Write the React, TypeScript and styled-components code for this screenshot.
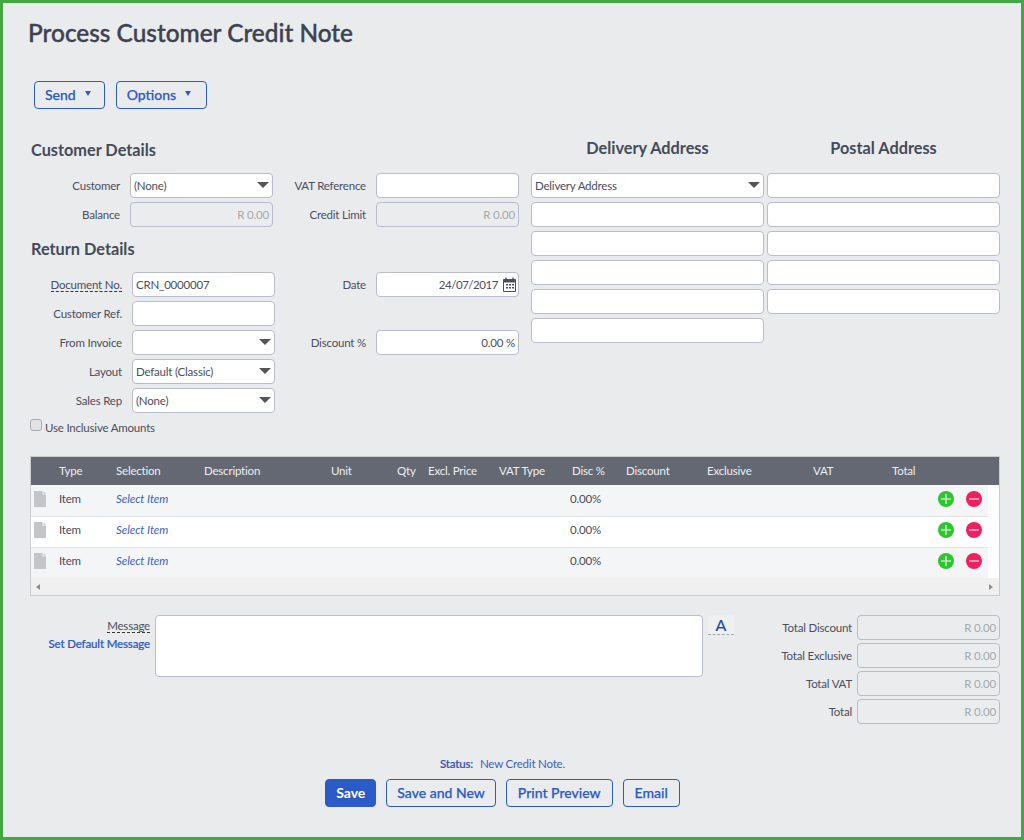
import React from "react";
import styled, { createGlobalStyle } from "styled-components";

const Global = createGlobalStyle`
  html, body { margin: 0; padding: 0; background: #eaebed; }
  * { box-sizing: border-box; }
  body { font-family: Lato, "Liberation Sans", sans-serif; }
`;

const Frame = styled.div`
  width: 1024px;
  height: 840px;
  border: 3px solid #43a843;
  background: #eaebed;
  padding: 0 21px 0 24px;
  color: #4a4e5f;
  display: flex;
  flex-direction: column;
  font-size: 11.5px;
  letter-spacing: -0.2px;
`;

const Title = styled.h1`
  margin: 15px 0 0;
  height: 30px;
  line-height: 30px;
  padding-left: 1px;
  font-size: 24.4px;
  font-weight: 500;
  letter-spacing: 0;
  -webkit-text-stroke: 0.4px #3d4252;
  color: #3d4252;
`;

const Toolbar = styled.div`
  display: flex;
  gap: 11px;
  margin: 33px 0 0 7px;
`;

const OutlineButton = styled.button<{ $primary?: boolean; $pad?: number }>`
  height: 28px;
  padding: 0 ${(p) => p.$pad ?? 10}px 1px;
  border: 1px solid #2a5bc9;
  border-radius: 4px;
  background: ${(p) => (p.$primary ? "#2a5bc9" : "transparent")};
  color: ${(p) => (p.$primary ? "#ffffff" : "#2a5bc9")};
  font: ${(p) => (p.$primary ? 700 : 500)} 14px Lato, sans-serif;
  -webkit-text-stroke: ${(p) => (p.$primary ? "0" : "0.25px")};
  display: inline-flex;
  align-items: center;
`;

const MenuCaret = styled.span<{ $trail: number }>`
  width: 0;
  height: 0;
  flex: none;
  margin: -2px ${(p) => p.$trail}px 0 9px;
  border-left: 3.5px solid transparent;
  border-right: 3.5px solid transparent;
  border-top: 5px solid #2a5bc9;
`;

const FormArea = styled.div`
  display: flex;
  gap: 12px;
  margin-top: 25px;
  height: 322px;
`;

const LeftColumn = styled.div`
  width: 492px;
  padding: 2px 0 0 3px;
`;

const SectionHeading = styled.h2`
  margin: 0;
  height: 28px;
  line-height: 28px;
  font-size: 16.3px;
  font-weight: 700;
  letter-spacing: 0;
  color: #454a59;
  padding-left: 1px;
`;

const FieldGrid = styled.div<{ $label: number }>`
  display: grid;
  grid-template-columns: ${(p) => p.$label}px 143px ${(p) => 173 - p.$label}px 143px;
  grid-auto-rows: 25px;
  column-gap: 10px;
  row-gap: 4px;
  margin: 9px 0 8px;
`;

const Label = styled.label<{ $dashed?: boolean; $col?: number; $row?: number }>`
  text-align: right;
  align-self: center;
  white-space: nowrap;
  justify-self: end;
  ${(p) => (p.$col ? `grid-column: ${p.$col};` : "")}
  ${(p) => (p.$row ? `grid-row: ${p.$row};` : "")}
  ${(p) => (p.$dashed ? "border-bottom: 1px dashed #333; line-height: 13px;" : "")}
`;

const Field = styled.div<{ $disabled?: boolean; $right?: boolean; $col?: number; $row?: number }>`
  position: relative;
  height: 25px;
  border: 1px solid #b9bbcf;
  border-radius: 4px;
  background: ${(p) => (p.$disabled ? "#ebecee" : "#ffffff")};
  color: ${(p) => (p.$disabled ? "#a5a8ad" : "#4a4e5f")};
  line-height: 23px;
  padding: 0 3px;
  text-align: ${(p) => (p.$right ? "right" : "left")};
  white-space: nowrap;
  ${(p) => (p.$col ? `grid-column: ${p.$col};` : "")}
  ${(p) => (p.$row ? `grid-row: ${p.$row};` : "")}
`;

const SelectCaret = styled.span`
  position: absolute;
  right: 3px;
  top: 8px;
  width: 0;
  height: 0;
  border-left: 6.5px solid transparent;
  border-right: 6.5px solid transparent;
  border-top: 6px solid #555;
`;

const DateField = styled(Field)`
  padding-right: 20px;
  letter-spacing: -0.45px;
`;

const CalendarSvg = styled.svg`
  position: absolute;
  right: 2px;
  top: 4px;
`;

const CheckRow = styled.label`
  display: flex;
  align-items: center;
  margin-top: -3px;
  height: 18px;
`;

const CheckBox = styled.span`
  width: 12px;
  height: 12px;
  margin-right: 3px;
  margin-top: -4px;
  border: 1px solid #a9aab4;
  border-radius: 3px;
  background: #e3e3e6;
`;

const AddressColumns = styled.div`
  display: flex;
  gap: 3px;
`;

const AddressColumn = styled.div`
  width: 233px;
  display: flex;
  flex-direction: column;
  gap: 4px;
`;

const AddressHeading = styled.h2`
  margin: 0 0 7px;
  height: 28px;
  line-height: 28px;
  text-align: center;
  font-size: 16.3px;
  font-weight: 700;
  letter-spacing: 0;
  color: #454a59;
`;

const TableBox = styled.div`
  margin: 0 0 0 3px;
  height: 140px;
  border: 1px solid #cbcccf;
  background: #ffffff;
  display: flex;
  flex-direction: column;
`;

const columns = "28px 57px 88px 127px 66px 31px 71px 71px 56px 81px 106px 79px 46px 28px 22px";

const HeaderRow = styled.div`
  display: grid;
  grid-template-columns: ${columns} 1fr;
  height: 28px;
  padding-bottom: 2px;
  align-items: center;
  background: #646872;
  color: #eceef2;
`;

const Rows = styled.div`
  width: 957px;
`;

const Row = styled.div<{ $odd?: boolean }>`
  display: grid;
  grid-template-columns: ${columns};
  height: 31px;
  padding-bottom: 3px;
  align-items: center;
  background: ${(p) => (p.$odd ? "#f4f5f7" : "#ffffff")};
  & + & {
    border-top: 1px solid #e3e4e6;
    padding-bottom: 4px;
  }
`;

const Cell = styled.span<{ $col?: number }>`
  white-space: nowrap;
  color: #474b57;
  margin-top: -2px;
  ${(p) => (p.$col ? `grid-column: ${p.$col};` : "")}
`;

const DocCell = styled.span`
  display: flex;
  padding-left: 3px;
`;

const ActionCell = styled.span<{ $col: number }>`
  display: flex;
  grid-column: ${(p) => p.$col};
`;

const HeadCell = styled.span<{ $indent?: number }>`
  white-space: nowrap;
  ${(p) => (p.$indent ? `padding-left: ${p.$indent}px;` : "")}
`;

const SelectLink = styled.span`
  font-style: italic;
  color: #3a61c4;
  white-space: nowrap;
  letter-spacing: -0.05px;
  margin-top: -2px;
`;

const Scrollbar = styled.div`
  margin-top: auto;
  height: 17px;
  background: #f0f0f0;
  display: flex;
  align-items: center;
  justify-content: space-between;
  padding: 0 6px 0 5px;
`;

const ScrollArrow = styled.span<{ $right?: boolean }>`
  width: 0;
  height: 0;
  border-top: 3.5px solid transparent;
  border-bottom: 3.5px solid transparent;
  ${(p) => (p.$right ? "border-left: 4px solid #8d8d8d;" : "border-right: 4px solid #8d8d8d;")}
`;

const BottomRow = styled.div`
  display: flex;
  margin: 19px 0 0 3px;
  height: 112px;
`;

const MessageLabels = styled.div`
  width: 120px;
  display: flex;
  flex-direction: column;
  align-items: flex-end;
  padding-top: 4px;
  gap: 4px;
`;

const DashedText = styled.span`
  border-bottom: 1px dashed #333;
  line-height: 13px;
`;

const SetDefault = styled.span`
  color: #2a5bc9;
  font-weight: 500;
  letter-spacing: -0.15px;
  -webkit-text-stroke: 0.2px #2a5bc9;
  white-space: nowrap;
`;

const MessageBox = styled.div`
  width: 548px;
  height: 62px;
  margin-left: 5px;
  background: #ffffff;
  border: 1px solid #b9bbcf;
  border-radius: 4px;
`;

const FontButton = styled.span`
  width: 26px;
  height: 20px;
  margin-left: 5px;
  text-align: center;
  font-size: 16px;
  letter-spacing: 0;
  line-height: 19px;
  color: #1e4d9b;
  -webkit-text-stroke: 0.2px #1e4d9b;
  background: #eeeff1;
  border-bottom: 1px dashed #a5a7ad;
  border-radius: 3px 3px 0 0;
`;

const Totals = styled.div`
  margin-left: auto;
  display: grid;
  grid-template-columns: auto 143px;
  column-gap: 5px;
  grid-auto-rows: 25px;
  row-gap: 3px;
`;

const StatusLine = styled.div`
  margin-top: 29px;
  height: 15px;
  line-height: 15px;
  color: #3a61c4;
  display: flex;
  justify-content: center;
  gap: 7px;
  padding-right: 22px;
`;

const StatusKey = styled.span`
  font-weight: 500;
  color: #3451b2;
  -webkit-text-stroke: 0.2px #3451b2;
`;

const ActionBar = styled.div`
  display: flex;
  justify-content: center;
  gap: 10px;
  margin-top: 8px;
  padding-right: 22px;
`;

const DocIcon = () => (
  <svg width="12" height="16" viewBox="0 0 12 16">
    <path d="M0 0H8.5V3.5H12V16H0Z" fill="#c4c5c9" />
    <path d="M9.5 0.5L12 2.8H9.5Z" fill="#c4c5c9" />
  </svg>
);

const PlusIcon = () => (
  <svg width="16" height="16" viewBox="0 0 16 16">
    <circle cx="8" cy="8" r="8" fill="#2fc52f" />
    <path d="M8 3V13M3 8H13" stroke="#bfe8bf" strokeWidth="1.6" />
  </svg>
);

const MinusIcon = () => (
  <svg width="16" height="16" viewBox="0 0 16 16">
    <circle cx="8" cy="8" r="8" fill="#ef1f60" />
    <path d="M3 8H13" stroke="#f4b3c6" strokeWidth="1.6" />
  </svg>
);

const CalendarIcon = () => (
  <CalendarSvg width="13" height="15" viewBox="0 0 13 15">
    <path d="M0.5 2.5H12.5V14.5H0.5Z" fill="none" stroke="#4a4e5f" />
    <path d="M0.5 2.5H12.5V5.5H0.5Z" fill="#4a4e5f" />
    <path d="M3 0.5V3M10 0.5V3" stroke="#4a4e5f" strokeWidth="1.4" />
    <path d="M3 7H5V8.6H3ZM6 7H8V8.6H6ZM9 7H11V8.6H9ZM3 10H5V11.6H3ZM6 10H8V11.6H6ZM9 10H11V11.6H9Z" fill="#4a4e5f" />
  </CalendarSvg>
);

const Select = ({ children, ...rest }: React.ComponentProps<typeof Field>) => (
  <Field {...rest}>
    {children}
    <SelectCaret />
  </Field>
);

const headers = ["", "Type", "Selection", "Description", "Unit", "Qty", "Excl. Price", "VAT Type", "Disc %", "Discount", "Exclusive", "VAT", "Total"];

export default function App() {
  return (
    <Frame>
      <Global />
      <Title>Process Customer Credit Note</Title>
      <Toolbar>
        <OutlineButton>Send<MenuCaret $trail={3} /></OutlineButton>
        <OutlineButton>Options<MenuCaret $trail={5} /></OutlineButton>
      </Toolbar>

      <FormArea>
        <LeftColumn>
          <SectionHeading>Customer Details</SectionHeading>
          <FieldGrid $label={90}>
            <Label>Customer</Label>
            <Select>(None)</Select>
            <Label>VAT Reference</Label>
            <Field />
            <Label>Balance</Label>
            <Field $disabled $right>R 0.00</Field>
            <Label>Credit Limit</Label>
            <Field $disabled $right>R 0.00</Field>
          </FieldGrid>
          <SectionHeading>Return Details</SectionHeading>
          <FieldGrid $label={92}>
            <Label $dashed>Document No.</Label>
            <Field>CRN_0000007</Field>
            <Label>Date</Label>
            <DateField $right>24/07/2017<CalendarIcon /></DateField>
            <Label $row={2}>Customer Ref.</Label>
            <Field $row={2} $col={2} />
            <Label $row={3}>From Invoice</Label>
            <Select $row={3} $col={2} />
            <Label $row={3} $col={3}>Discount %</Label>
            <Field $row={3} $col={4} $right>0.00 %</Field>
            <Label $row={4}>Layout</Label>
            <Select $row={4} $col={2}>Default (Classic)</Select>
            <Label $row={5}>Sales Rep</Label>
            <Select $row={5} $col={2}>(None)</Select>
          </FieldGrid>
          <CheckRow><CheckBox />Use Inclusive Amounts</CheckRow>
        </LeftColumn>
        <AddressColumns>
          <AddressColumn>
            <AddressHeading>Delivery Address</AddressHeading>
            <Select>Delivery Address</Select>
            <Field />
            <Field />
            <Field />
            <Field />
            <Field />
          </AddressColumn>
          <AddressColumn>
            <AddressHeading>Postal Address</AddressHeading>
            <Field />
            <Field />
            <Field />
            <Field />
            <Field />
          </AddressColumn>
        </AddressColumns>
      </FormArea>

      <TableBox>
        <HeaderRow>
          {headers.map((h, i) => <HeadCell key={i} $indent={h === "Disc %" ? 2 : 0}>{h}</HeadCell>)}
        </HeaderRow>
        <Rows>
          {[0, 1, 2].map((i) => (
            <Row key={i} $odd={i !== 1}>
              <DocCell><DocIcon /></DocCell>
              <Cell>Item</Cell>
              <SelectLink>Select Item</SelectLink>
              <Cell $col={9}>0.00%</Cell>
              <ActionCell $col={14}><PlusIcon /></ActionCell>
              <ActionCell $col={15}><MinusIcon /></ActionCell>
            </Row>
          ))}
        </Rows>
        <Scrollbar>
          <ScrollArrow />
          <ScrollArrow $right />
        </Scrollbar>
      </TableBox>

      <BottomRow>
        <MessageLabels>
          <DashedText>Message</DashedText>
          <SetDefault>Set Default Message</SetDefault>
        </MessageLabels>
        <MessageBox />
        <FontButton>A</FontButton>
        <Totals>
          <Label>Total Discount</Label>
          <Field $disabled $right>R 0.00</Field>
          <Label>Total Exclusive</Label>
          <Field $disabled $right>R 0.00</Field>
          <Label>Total VAT</Label>
          <Field $disabled $right>R 0.00</Field>
          <Label>Total</Label>
          <Field $disabled $right>R 0.00</Field>
        </Totals>
      </BottomRow>

      <StatusLine>
        <StatusKey>Status:</StatusKey>
        <span>New Credit Note.</span>
      </StatusLine>
      <ActionBar>
        <OutlineButton $primary>Save</OutlineButton>
        <OutlineButton>Save and New</OutlineButton>
        <OutlineButton $pad={11}>Print Preview</OutlineButton>
        <OutlineButton $pad={11}>Email</OutlineButton>
      </ActionBar>
    </Frame>
  );
}
